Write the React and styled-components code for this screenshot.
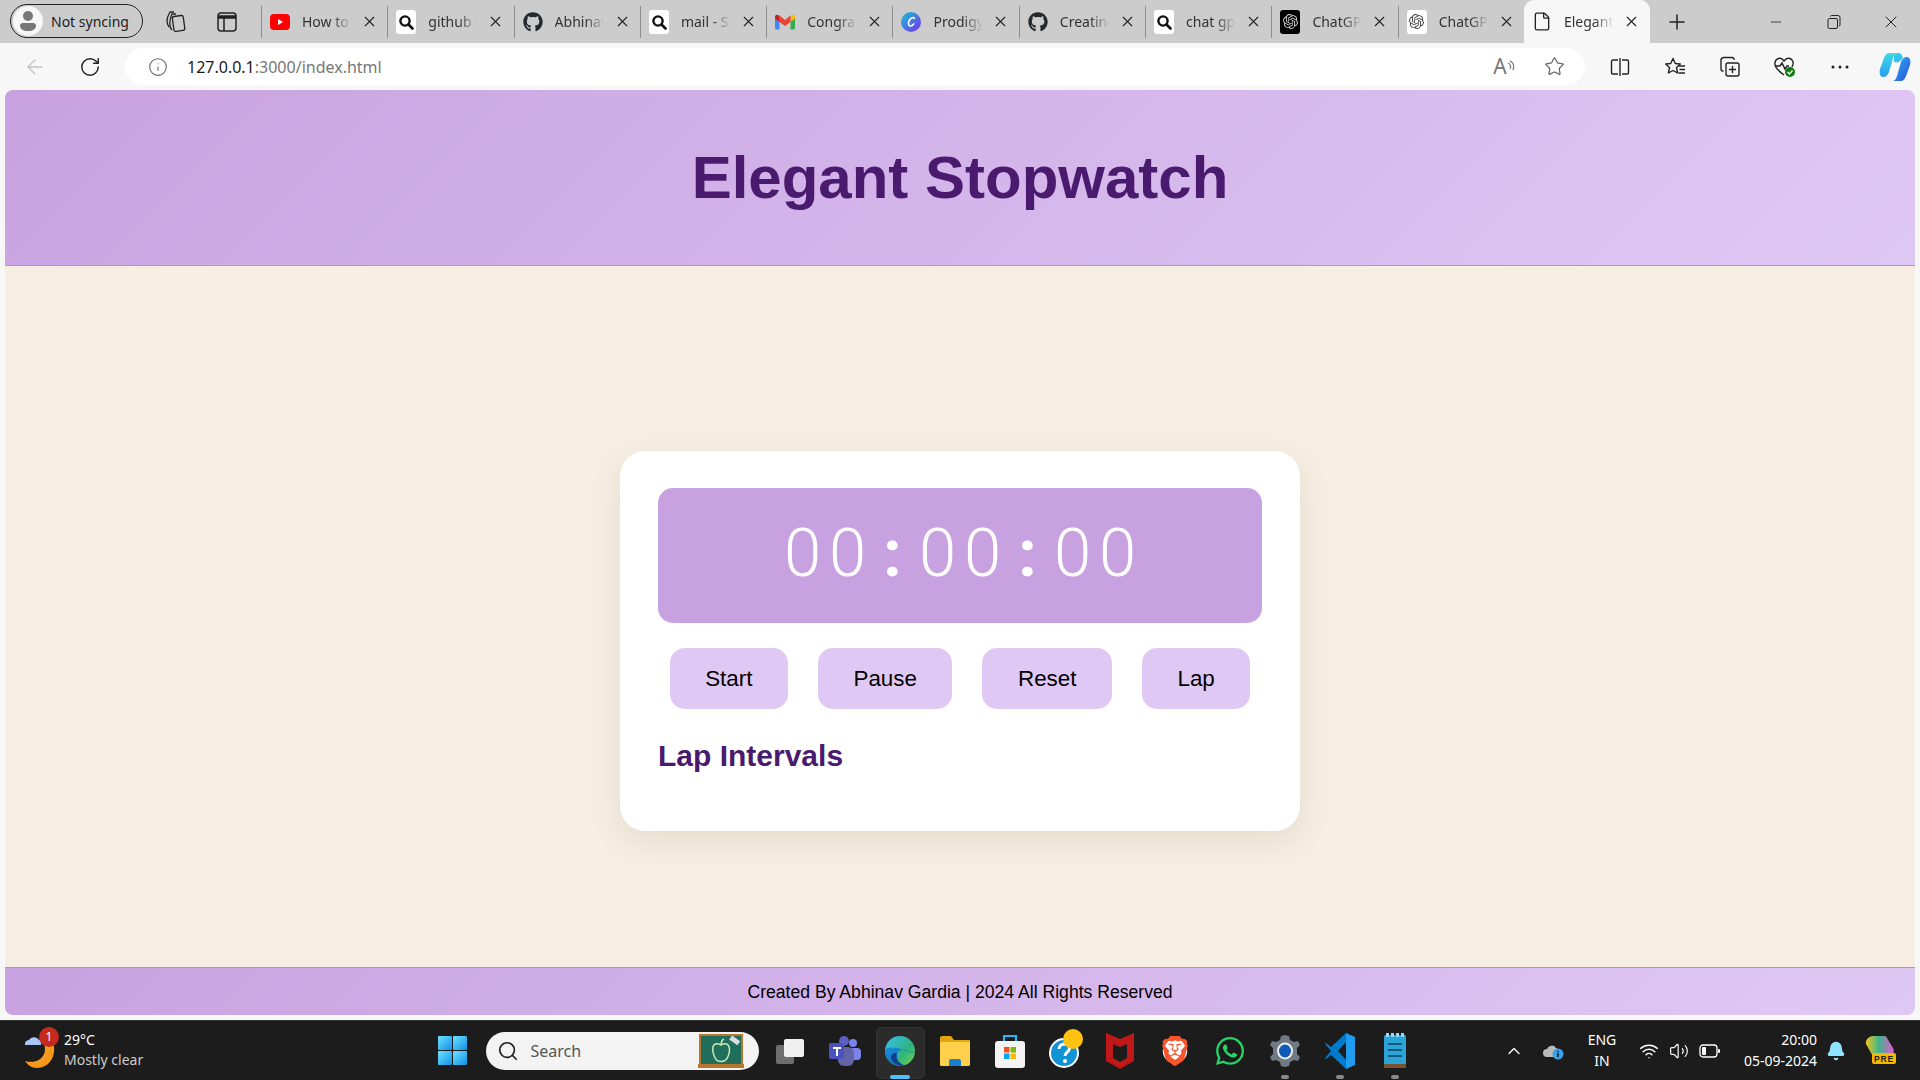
import React from "react";
import styled, { createGlobalStyle } from "styled-components";
import { FaGithub, FaWhatsapp } from "react-icons/fa";
import { SiOpenai, SiBrave } from "react-icons/si";
import { ArrowLeft, RotateCw, Info, Star, Plus, Minus, X, Search, ChevronUp, Wifi, Volume2, Bell, File } from "lucide-react";

const Global = createGlobalStyle`
  html, body { margin: 0; padding: 0; height: 100%; overflow: hidden; }
  #root { height: 100%; }
  * { box-sizing: border-box; }
`;

const Screen = styled.div`
  width: 1920px; height: 1080px; display: flex; flex-direction: column;
  background: #f7f7f7; font-family: "Noto Sans", "Open Sans", sans-serif; overflow: hidden;
`;
const TabStrip = styled.div`
  height: 43px; flex: none; background: #cccccc; display: flex; align-items: stretch; color: #222;
`;
const Sync = styled.div`
  width: 133px; height: 34px; margin: 4px 0 0 10px; border: 1.5px solid #222; border-radius: 17px;
  display: flex; align-items: center; gap: 8px; padding-left: 2px; font-size: 14px; color: #1c1c1c;
`;
const Avatar = styled.span`
  width: 30px; height: 30px; border-radius: 50%; background: #f7f7f7; display: flex; align-items: center; justify-content: center;
`;
const StripIcon = styled.div`
  width: ${p => p.$w}px; flex: none; display: flex; align-items: center; justify-content: center;
`;
const Tab = styled.div`
  width: 126.3px; flex: none; display: flex; align-items: center; position: relative; padding-left: 8px;
  padding-bottom: ${p => p.$active ? "0" : "1px"};
  border-left: ${p => p.$active ? "none" : "1.5px solid #8e8e8e"};
  background: ${p => p.$active ? "#f7f7f7" : "transparent"};
  border-radius: ${p => p.$active ? "10px 10px 0 0" : "0"};
  height: ${p => p.$active ? "43px" : "32px"};
  margin-top: ${p => p.$active ? "0" : "6px"};
`;
const Favicon = styled.span`
  width: 20px; height: 24px; flex: none; display: flex; align-items: center; justify-content: center;
  border-radius: 3px; background: ${p => p.$bg || "transparent"};
`;
const TabTitle = styled.span`
  width: 50px; margin-left: 12px; font-size: 14px; white-space: nowrap; overflow: hidden; color: #333;
  -webkit-mask-image: linear-gradient(to right, #000 60%, transparent 100%);
  mask-image: linear-gradient(to right, #000 60%, transparent 100%);
`;
const TabClose = styled.span`
  margin-left: 9px; display: flex; align-items: center; color: #222;
`;
const NewTab = styled.div`
  width: 54px; flex: none; display: flex; align-items: center; justify-content: center; color: #222;
`;
const WindowControls = styled.div`
  margin-left: auto; display: flex; align-items: center; color: #222;
`;
const WindowButton = styled.div`
  width: 57.5px; display: flex; align-items: center; justify-content: center;
`;
const AddressRow = styled.div`
  height: 47px; flex: none; background: #f7f7f7; display: flex; align-items: center; padding-left: 7px;
`;
const NavButton = styled.div`
  width: 55px; flex: none; display: flex; align-items: center; justify-content: center;
  margin-left: ${p => p.$gap || 0}px;
  color: ${p => p.$muted ? "#c4c4c4" : "#222"};
`;
const UrlPill = styled.div`
  width: 1460px; height: 37px; margin-left: 8px; background: #fff; border-radius: 19px; flex: none;
  display: flex; align-items: center; padding: 0 6px 0 23px; color: #666;
`;
const Url = styled.span`
  margin-left: 19px; font-size: 16px; color: #777; flex: 1;
  & b { font-weight: 400; color: #1a1a1a; }
`;
const PillAction = styled.span`
  display: flex; width: 50px; justify-content: center; align-items: center; color: #666;
`;
const ReadAloud = styled.span`
  font-size: 21px; color: #777; line-height: 1;
`;
const Viewport = styled.div`
  height: 925px; flex: none; margin: 0 5px; display: flex; flex-direction: column; background: #f6eee3;
  border-radius: 8px; overflow: hidden;
  font-family: "Liberation Sans", Arial, sans-serif;
`;
const Banner = styled.header`
  height: 176px; flex: none; background: linear-gradient(135deg, #c8a2e0, #e0c8f4);
  border-bottom: 1px solid #b98fdc; display: flex; align-items: center; justify-content: center;
`;
const Title = styled.h1`
  margin: 0; font-size: 60px; font-weight: 700; color: #4a1a6e;
`;
const Main = styled.main`
  flex: 1; display: flex; align-items: center; justify-content: center; padding-top: 49px;
`;
const Card = styled.section`
  width: 680px; height: 380px; background: #fff; border-radius: 25px; padding: 37px 38px;
  box-shadow: 0 10px 30px rgba(100, 70, 30, 0.1);
`;
const Display = styled.div`
  height: 135px; background: #c8a2e0; border-radius: 15px; color: #fff; display: flex; align-items: center; justify-content: center;
  font-family: "Roboto", sans-serif; font-size: 67px; padding-bottom: 6px;
`;
const Glyph = styled.span`
  width: 45px; text-align: center; font-weight: ${p => p.$bold ? 700 : 300};
`;
const Controls = styled.div`
  display: flex; justify-content: center; gap: 30px; margin-top: 25px;
`;
const Button = styled.button`
  height: 61px; padding: 0 35.5px; border: none; border-radius: 15px; background: #e0c8f4; color: #000;
  font-family: "Liberation Sans", Arial, sans-serif; font-size: 22.4px;
`;
const LapTitle = styled.h2`
  margin: 27px 0 0; font-size: 30px; font-weight: 700; color: #4a1a6e; line-height: 40px;
`;
const Foot = styled.footer`
  height: 48px; flex: none; background: linear-gradient(135deg, #c8a2e0, #e0c8f4); border-top: 1px solid #b98fdc;
  display: flex; align-items: center; justify-content: center; font-size: 17.6px; color: #000; padding-top: 1px;
`;
const Taskbar = styled.div`
  margin-top: 5px; height: 60px; flex: none; background: #1c1c1c; border-top: 1px solid #333; color: #fff;
  display: flex; align-items: center;
`;
const Weather = styled.div`
  width: 424.5px; flex: none; display: flex; align-items: center; padding-left: 20px; gap: 8px; position: relative;
`;
const WeatherBadge = styled.span`
  position: absolute; left: 39px; top: -2px; width: 20px; height: 20px; border-radius: 50%; background: #c42b1c;
  font-size: 12px; display: flex; align-items: center; justify-content: center;
`;
const WeatherText = styled.div`
  font-size: 14px; line-height: 20px; padding-bottom: 2px; & span { display: block; color: #ccc; }
`;
const Slot = styled.div`
  width: 55px; height: 60px; flex: none; display: flex; align-items: center; justify-content: center; position: relative;
`;
const ActiveBox = styled.span`
  position: absolute; inset: 6px 3px 2px; border-radius: 5px; background: #2b2b2b; border: 1px solid #333;
`;
const Dot = styled.span`
  position: absolute; bottom: 2px; left: 50%; transform: translateX(-50%); height: 4px; border-radius: 2px;
  width: ${p => p.$on ? "20px" : "8px"}; background: ${p => p.$on ? "#4cc2ff" : "#8a8a8a"}; z-index: 1;
`;
const SlotIcon = styled.span`
  position: relative; z-index: 1; display: flex;
`;
const BraveBack = styled.span`
  display: flex; background: radial-gradient(circle, #fff 55%, transparent 60%);
`;
const SearchBox = styled.div`
  width: 273px; height: 38px; margin: 0 4px 0 6px; flex: none; border-radius: 19px; background: #f3f3f3;
  display: flex; align-items: center; padding: 0 15px 0 11px; color: #1c1c1c; font-size: 16px;
  & span { margin-left: 12px; color: #555; flex: 1; }
`;
const Tray = styled.div`
  margin-left: 76.5px; display: flex; align-items: center; flex: none;
`;
const TrayItem = styled.div`
  width: ${p => p.$w}px; flex: none; display: flex; align-items: center; justify-content: center;
`;
const Lang = styled.div`
  font-size: 14px; line-height: 21px; text-align: center; width: 46px; margin-right: 9px; flex: none; padding-bottom: 2px;
`;
const Clock = styled.div`
  width: 91px; flex: none; font-size: 14px; line-height: 21px; text-align: right; white-space: nowrap; padding-bottom: 2px;
`;

const Magnifier = () => (
  <svg width="16" height="16" viewBox="0 0 16 16"><circle cx="7" cy="7" r="4.6" fill="none" stroke="#111" strokeWidth="2.4" /><path d="M10.5 10.5L14.5 14.5" stroke="#111" strokeWidth="2.6" strokeLinecap="round" /></svg>
);
const YouTube = () => (
  <svg width="20" height="16" viewBox="0 0 20 16"><rect width="20" height="16" rx="4" fill="#f00" /><path d="M8 5l5 3-5 3z" fill="#fff" /></svg>
);
const Gmail = () => (
  <svg width="20" height="16" viewBox="0 0 20 16">
    <path d="M0 3v11a1.4 1.4 0 0 0 1.4 1.4H4.5V7z" fill="#4285f4" />
    <path d="M20 3v11a1.4 1.4 0 0 1-1.4 1.4h-3.1V7z" fill="#34a853" />
    <path d="M15.5 1.5V8L20 4.500V3c0-2-2-3-3.300-1.700z" fill="#fbbc04" />
    <path d="M4.500 8V1.500L10 6l5.500-4.500V8L10 12z" fill="#ea4335" />
    <path d="M0 3v1.500L4.500 8V1.500l-1.200-.2C2 0 0 1 0 3z" fill="#c5221f" />
  </svg>
);
const Canva = () => (
  <svg width="20" height="20" viewBox="0 0 20 20">
    <defs><linearGradient id="cv" x1="0" y1="0" x2="1" y2="1"><stop offset="0" stopColor="#12c6d6" /><stop offset="1" stopColor="#7d2ae8" /></linearGradient></defs>
    <circle cx="10" cy="10" r="10" fill="url(#cv)" />
    <path d="M13.500 6.500C12.800 4.800 10 5.500 8.500 8c-1.500 2.500-1.500 6 .8 6 1.500 0 2.800-1 3.500-2.200" fill="none" stroke="#fff" strokeWidth="1.500" strokeLinecap="round" />
  </svg>
);

const tabs = [
  { t: "How to", icon: <YouTube /> },
  { t: "github r", icon: <Magnifier />, bg: "#fff" },
  { t: "Abhinav", icon: <FaGithub size={20} color="#24292f" /> },
  { t: "mail - S", icon: <Magnifier />, bg: "#fff" },
  { t: "Congrat", icon: <Gmail /> },
  { t: "Prodigy", icon: <Canva /> },
  { t: "Creating", icon: <FaGithub size={20} color="#24292f" /> },
  { t: "chat gp", icon: <Magnifier />, bg: "#fff" },
  { t: "ChatGP", icon: <SiOpenai size={15} color="#ccc" />, bg: "#000" },
  { t: "ChatGP", icon: <SiOpenai size={15} color="#444" />, bg: "#fff" },
];

const WinLogo = () => (
  <svg width="29" height="29" viewBox="0 0 29 29">
    <defs><linearGradient id="wl" x1="0" y1="0" x2="1" y2="1"><stop offset="0" stopColor="#6fe3ff" /><stop offset="1" stopColor="#0f8fe8" /></linearGradient></defs>
    <g fill="url(#wl)"><rect width="14" height="14" rx="1" /><rect x="15" width="14" height="14" rx="1" /><rect y="15" width="14" height="14" rx="1" /><rect x="15" y="15" width="14" height="14" rx="1" /></g>
  </svg>
);
const TaskView = () => (
  <svg width="30" height="28" viewBox="0 0 30 28">
    <rect x="1" y="8" width="18" height="19" rx="2" fill="#6e6e6e" />
    <rect x="9" y="2" width="20" height="18" rx="2" fill="#f0f0f0" />
  </svg>
);
const Teams = () => (
  <svg width="32" height="32" viewBox="0 0 32 32">
    <circle cx="24" cy="8" r="4" fill="#7b83eb" /><rect x="20" y="13" width="12" height="12" rx="4" fill="#7b83eb" />
    <circle cx="15" cy="6" r="5" fill="#5b5fc7" /><rect x="9" y="12" width="16" height="19" rx="6" fill="#6264a7" />
    <rect x="0" y="8" width="15" height="16" rx="2" fill="#4b53bc" />
    <path d="M4 12h8v2H9v7H7v-7H4z" fill="#fff" />
  </svg>
);
const Edge = () => (
  <svg width="30" height="36" viewBox="0 0 30 30">
    <defs>
      <linearGradient id="eg1" x1="0" y1="0" x2="1" y2="1"><stop offset="0" stopColor="#35c1f1" /><stop offset="0.6" stopColor="#2fb47c" /><stop offset="1" stopColor="#75d648" /></linearGradient>
      <linearGradient id="eg2" x1="0" y1="0" x2="1" y2="1"><stop offset="0" stopColor="#1a8fe0" /><stop offset="1" stopColor="#0c59a4" /></linearGradient>
    </defs>
    <circle cx="15" cy="15" r="15" fill="url(#eg1)" />
    <path d="M0 15C1 28 12 31 20 29.500 13 27 10 21 13 16c2-3 8-3 12 0 2 2 5 0 5-2-1 5-12-1-18-2C6 11 1 11 0 15z" fill="url(#eg2)" />
    <path d="M12 17c-2 5 1 11 8 12.500-7 1-13-3-14-8 0-3 3-5 6-4.500z" fill="#0f3f8c" />
  </svg>
);
const Folder = () => (
  <svg width="30" height="32" viewBox="0 0 30 32">
    <path d="M0 3a2 2 0 0 1 2-2h9l3 4H0z" fill="#e3a50f" />
    <rect y="5" width="30" height="26" rx="1.500" fill="#ffd04b" />
    <path d="M9 31v-5a2 2 0 0 1 2-2h8a2 2 0 0 1 2 2v5z" fill="#1b7fd0" />
    <rect y="5" width="30" height="2" fill="#e3a50f" />
  </svg>
);
const Store = () => (
  <svg width="30" height="34" viewBox="0 0 30 34">
    <path d="M9 8V2h12v6" fill="none" stroke="#29b6f6" strokeWidth="2.200" />
    <rect y="7" width="30" height="27" rx="3" fill="#f3f3f3" />
    <rect x="9" y="13" width="5.500" height="5.500" fill="#f25022" /><rect x="15.500" y="13" width="5.500" height="5.500" fill="#7fba00" />
    <rect x="9" y="19.500" width="5.500" height="5.500" fill="#00a4ef" /><rect x="15.500" y="19.500" width="5.500" height="5.500" fill="#ffb900" />
  </svg>
);
const Help = () => (
  <svg width="36" height="44" viewBox="0 0 36 44">
    <circle cx="17" cy="24" r="14" fill="#1094d6" stroke="#fff" strokeWidth="2" />
    <path d="M12 20c0-3 2.500-5 5.500-5s5 2 5 4.500c0 3.500-4.500 3.500-4.500 7.500" fill="none" stroke="#fff" strokeWidth="3" />
    <circle cx="18" cy="32" r="2" fill="#fff" />
    <circle cx="26" cy="10" r="10" fill="#ffc20e" />
  </svg>
);
const McAfee = () => (
  <svg width="28" height="36" viewBox="0 0 28 36">
    <path d="M0 0l14 6 14-6v28l-14 8-14-8z" fill="#c01818" />
    <path d="M7 11l7 3 7-3v14l-7 4-7-4z" fill="#1c1c1c" />
  </svg>
);
const Gear = () => (
  <svg width="30" height="36" viewBox="0 0 30 36">
    <path d="M15 2l4 1 1 4 4 2 4-1 2 4-3 3v6l3 3-2 4-4-1-4 2-1 4-4 1-4-1-1-4-4-2-4 1-2-4 3-3v-6L0 12l2-4 4 1 4-2 1-4z" fill="#6f7a85" />
    <ellipse cx="15" cy="18" rx="8" ry="8.500" fill="#eee" /><ellipse cx="15" cy="18" rx="6" ry="6.500" fill="#0f5ab4" />
  </svg>
);
const VSCode = () => (
  <svg width="30" height="36" viewBox="0 0 30 36">
    <path d="M21 0l9 4v28l-9 4z" fill="#1f9cf0" />
    <path d="M21 0L6 14 1 10l-1 1 6 7-6 7 1 1 5-4 15 14v-9l-8-9 8-9z" fill="#007acc" />
  </svg>
);
const Notepad = () => (
  <svg width="22" height="36" viewBox="0 0 22 36">
    <rect y="2" width="22" height="32" rx="1.500" fill="#2ba4d8" />
    <rect y="31" width="22" height="4" fill="#7a5230" />
    <g fill="#8fdcf5"><rect x="2" y="0" width="3" height="4" /><rect x="7" y="0" width="3" height="4" /><rect x="12" y="0" width="3" height="4" /><rect x="17" y="0" width="3" height="4" /></g>
    <g fill="#14587e"><rect x="4" y="10" width="14" height="2" /><rect x="4" y="16" width="14" height="2" /><rect x="4" y="22" width="14" height="2" /></g>
  </svg>
);
const Copilot = () => (
  <svg width="32" height="32" viewBox="0 0 32 32">
    <defs>
      <linearGradient id="cpa" x1="0" y1="0" x2="0" y2="1"><stop offset="0" stopColor="#3fd8e8" /><stop offset="1" stopColor="#2b9ff0" /></linearGradient>
      <linearGradient id="cpb" x1="0" y1="0" x2="1" y2="1"><stop offset="0" stopColor="#36b5f5" /><stop offset="1" stopColor="#2350d8" /></linearGradient>
    </defs>
    <path d="M10 2h9c-3 0-4 2-5 5l-4 14c-1 3-3 5-6 5-3 0-4-4-3-8L5 7c1-3 3-5 5-5z" fill="url(#cpa)" />
    <path d="M22 30h-9c3 0 4-2 5-5l4-14c1-3 3-5 6-5 3 0 4 4 3 8l-4 11c-1 3-3 5-5 5z" fill="url(#cpb)" />
    <path d="M15 5c1-2 2-3 4-3 3 0 4 2 5 5l-3 3c-1 2-4 1-6 1z" fill="#34c4f0" />
  </svg>
);
const CopilotPre = () => (
  <svg width="34" height="34" viewBox="0 0 34 34">
    <defs><linearGradient id="cq" x1="0" y1="0" x2="1" y2="0"><stop offset="0" stopColor="#f5c518" /><stop offset="0.45" stopColor="#3fb68b" /><stop offset="1" stopColor="#e25ad0" /></linearGradient></defs>
    <path d="M9 2h11c2 0 3 1 3.500 3L29 14c2 4 0 8-4 8H11c-2 0-3-1-4-3L2 10c-1-4 3-8 7-8z" fill="url(#cq)" />
    <rect x="8" y="19" width="24" height="11" rx="2" fill="#f5b800" />
    <text x="20" y="28" textAnchor="middle" fontSize="8.500" fontWeight="700" fontFamily="Liberation Sans" fill="#1c1c1c" letterSpacing="0.800">PRE</text>
  </svg>
);
const Battery = () => (
  <svg width="22" height="14" viewBox="0 0 22 14">
    <rect x="1" y="1" width="17" height="12" rx="3" fill="none" stroke="#fff" strokeWidth="1.300" />
    <rect x="3" y="3" width="4" height="8" rx="1" fill="#fff" /><rect x="19" y="5" width="2" height="4" rx="1" fill="#fff" />
  </svg>
);
const CloudInfo = () => (
  <svg width="22" height="18" viewBox="0 0 22 18">
    <path d="M4 15a4 4 0 0 1 0-8 5 5 0 0 1 9-1 4 4 0 0 1 3 5v4z" fill="#bbb" />
    <circle cx="15" cy="12" r="5.500" fill="#3aa0e8" /><rect x="14.300" y="11" width="1.400" height="4" fill="#111" /><rect x="14.300" y="8.800" width="1.400" height="1.400" fill="#111" />
  </svg>
);
const WeatherIcon = () => (
  <svg width="36" height="44" viewBox="0 0 36 44">
    <path d="M5 16a4 4 0 0 1 4-5 6 6 0 0 1 10 0h2v5z" fill="#a7c5f5" />
    <path d="M33 14c4 10-2 25-16 25-6 0-9-3-12-7 10 3 20-2 20-12 0-3-1-5-1-6z" fill="#f39a1c" />
  </svg>
);
const ApplePic = () => (
  <svg width="46" height="36" viewBox="0 0 46 36">
    <rect x="2" y="2" width="42" height="30" fill="#1f6f5c" stroke="#b9752b" strokeWidth="2" />
    <rect x="0" y="31" width="46" height="4" fill="#b9752b" />
    <path d="M16 12c2-2 5-1 7 0 2-1 5-2 7 0 3 3 1 14-4 16-2 1-4 0-6 0-4-2-7-13-4-16z" fill="#1f6f5c" stroke="#cfe8b0" strokeWidth="1.500" />
    <path d="M23 12c0-3 1-5 3-6" stroke="#cfe8b0" strokeWidth="1.500" fill="none" />
    <rect x="32" y="5" width="10" height="5" fill="#ddd" transform="rotate(35 37 7)" />
  </svg>
);
const Workspaces = () => (
  <svg width="22" height="24" viewBox="0 0 22 24" fill="none" stroke="#222" strokeWidth="1.300"><rect x="9" y="6" width="11" height="15" rx="2" transform="rotate(-8 14 13)" /><path d="M8 20C5 17 5 10 8 4h4M5 17C2 13 3 7 6 2h4" /></svg>
);
const TabsPanel = () => (
  <svg width="20" height="20" viewBox="0 0 20 20" fill="none" stroke="#222" strokeWidth="1.500"><rect x="1" y="1" width="18" height="18" rx="3" /><path d="M1 5h18" strokeWidth="3.500" /><path d="M7 6v13" /></svg>
);
const Restore = () => (
  <svg width="14" height="14" viewBox="0 0 14 14" fill="none" stroke="#222" strokeWidth="1"><rect x="1" y="3.500" width="9.500" height="10" rx="1.500" /><path d="M3.500 1.500a1 1 0 0 1 1-1h6.500a2 2 0 0 1 2 2v7.500a1 1 0 0 1-1 1" /></svg>
);
const Split = () => (
  <svg width="20" height="20" viewBox="0 0 20 20" fill="none" stroke="#222" strokeWidth="1.400"><path d="M8 3H3a1.500 1.500 0 0 0-1.500 1.500v11A1.500 1.500 0 0 0 3 17h5M12 3h5a1.500 1.500 0 0 1 1.500 1.500v11A1.500 1.500 0 0 1 17 17h-5M10 1v18" /></svg>
);
const Favorites = () => (
  <svg width="22" height="22" viewBox="0 0 22 22" fill="none" stroke="#222" strokeWidth="1.400"><path d="M9 2.500l2.300 5 5 .5-3.800 3.500 1.100 5.500L9 14.500l-4.600 2.500 1.100-5.500L1.700 8l5-.5z" strokeLinejoin="round" /><path d="M15 10h6M15.500 13.500h5.500M14.500 17h6.500" /></svg>
);
const Collections = () => (
  <svg width="22" height="22" viewBox="0 0 22 22" fill="none" stroke="#222" strokeWidth="1.400"><rect x="7" y="7" width="13" height="13" rx="2" /><path d="M13.500 10v7M10 13.500h7M15 4a2 2 0 0 0-2-2.500H5A3 3 0 0 0 2 4.500V13a2 2 0 0 0 2.500 2" /></svg>
);
const Health = () => (
  <svg width="26" height="24" viewBox="0 0 26 24" fill="none" stroke="#222" strokeWidth="1.400"><path d="M12 20C2 13 2 8 4 5c3-3 6-2 8 1 2-3 6-4 8-1 2 2 1 5 0 7" /><path d="M3 11h5l2-3 3 6 2-3h2" /><circle cx="18" cy="17" r="5" fill="#107c10" stroke="none" /><path d="M15.500 17l2 2 3-3.500" stroke="#fff" /></svg>
);
const Dots = () => (
  <svg width="20" height="4" viewBox="0 0 20 4" fill="#222"><circle cx="3" cy="2" r="1.500" /><circle cx="10" cy="2" r="1.500" /><circle cx="17" cy="2" r="1.500" /></svg>
);

const Close = () => <X size={17} strokeWidth={1.6} />;

const apps = [
  { c: <Teams /> }, { c: <Edge />, active: true }, { c: <Folder /> }, { c: <Store /> }, { c: <Help /> },
  { c: <McAfee /> }, { c: <BraveBack><SiBrave size={30} color="#fb542b" /></BraveBack> }, { c: <FaWhatsapp size={32} color="#25d366" /> },
  { c: <Gear />, dot: true }, { c: <VSCode />, dot: true }, { c: <Notepad />, dot: true },
];

const time = ["0", "0", ":", "0", "0", ":", "0", "0"];

export default function App() {
  return (
    <Screen>
      <Global />
      <TabStrip>
        <Sync>
          <Avatar>
            <svg width="20" height="22" viewBox="0 0 20 22"><circle cx="10" cy="6" r="5" fill="#777" /><path d="M2 15a3 3 0 0 1 3-2h10a3 3 0 0 1 3 2c0 4-3 6-8 6s-8-2-8-6z" fill="#777" /></svg>
          </Avatar>
          Not syncing
        </Sync>
        <StripIcon $w={63}><Workspaces /></StripIcon>
        <StripIcon $w={41}><TabsPanel /></StripIcon>
        <StripIcon $w={14} />
        {tabs.map((x, i) => (
          <Tab key={i}>
            <Favicon $bg={x.bg}>{x.icon}</Favicon>
            <TabTitle>{x.t}</TabTitle>
            <TabClose><Close /></TabClose>
          </Tab>
        ))}
        <Tab $active>
          <Favicon><File size={21} strokeWidth={1.6} color="#222" /></Favicon>
          <TabTitle>Elegant</TabTitle>
          <TabClose><Close /></TabClose>
        </Tab>
        <NewTab><Plus size={24} strokeWidth={1.5} /></NewTab>
        <WindowControls>
          <WindowButton><Minus size={16} strokeWidth={1.2} /></WindowButton>
          <WindowButton><Restore /></WindowButton>
          <WindowButton><X size={20} strokeWidth={1.2} /></WindowButton>
        </WindowControls>
      </TabStrip>
      <AddressRow>
        <NavButton $muted><ArrowLeft size={24} strokeWidth={1.3} /></NavButton>
        <NavButton><RotateCw size={22} strokeWidth={1.6} /></NavButton>
        <UrlPill>
          <Info size={20} strokeWidth={1.3} />
          <Url><b>127.0.0.1</b>:3000/index.html</Url>
          <PillAction><ReadAloud>A</ReadAloud><svg width="8" height="14" viewBox="0 0 8 14" fill="none" stroke="#777" strokeWidth="1.200"><path d="M1 3c3 1 3 4 2 6M3 1c4 2 4 6 3 9" /></svg></PillAction>
          <PillAction><Star size={21} strokeWidth={1.4} /></PillAction>
        </UrlPill>
        <NavButton $gap={7.5}><Split /></NavButton>
        <NavButton><Favorites /></NavButton>
        <NavButton><Collections /></NavButton>
        <NavButton><Health /></NavButton>
        <NavButton><Dots /></NavButton>
        <NavButton><Copilot /></NavButton>
      </AddressRow>
      <Viewport>
        <Banner><Title>Elegant Stopwatch</Title></Banner>
        <Main>
          <Card>
            <Display>
              {time.map((g, i) => <Glyph key={i} $bold={g === ":"}>{g}</Glyph>)}
            </Display>
            <Controls>
              <Button>Start</Button>
              <Button>Pause</Button>
              <Button>Reset</Button>
              <Button>Lap</Button>
            </Controls>
            <LapTitle>Lap Intervals</LapTitle>
          </Card>
        </Main>
        <Foot>Created By Abhinav Gardia | 2024 All Rights Reserved</Foot>
      </Viewport>
      <Taskbar>
        <Weather>
          <WeatherIcon />
          <WeatherBadge>1</WeatherBadge>
          <WeatherText>29°C<span>Mostly clear</span></WeatherText>
        </Weather>
        <Slot><WinLogo /></Slot>
        <SearchBox>
          <Search size={22} strokeWidth={1.8} />
          <span>Search</span>
          <ApplePic />
        </SearchBox>
        <Slot><TaskView /></Slot>
        {apps.map((a, i) => (
          <Slot key={i}>
            {a.active && <ActiveBox />}
            <SlotIcon>{a.c}</SlotIcon>
            {a.active && <Dot $on />}
            {a.dot && <Dot />}
          </Slot>
        ))}
        <Tray>
          <TrayItem $w={30}><ChevronUp size={20} strokeWidth={1.6} /></TrayItem>
          <TrayItem $w={50}><CloudInfo /></TrayItem>
          <Lang>ENG<br />IN</Lang>
          <TrayItem $w={30}><Wifi size={20} strokeWidth={1.8} /></TrayItem>
          <TrayItem $w={30}><Volume2 size={20} strokeWidth={1.4} /></TrayItem>
          <TrayItem $w={32}><Battery /></TrayItem>
          <Clock>20:00<br />05-09-2024</Clock>
          <TrayItem $w={38}><Bell size={20} fill="#8fe3ff" color="#8fe3ff" /></TrayItem>
          <TrayItem $w={52}><CopilotPre /></TrayItem>
        </Tray>
      </Taskbar>
    </Screen>
  );
}
